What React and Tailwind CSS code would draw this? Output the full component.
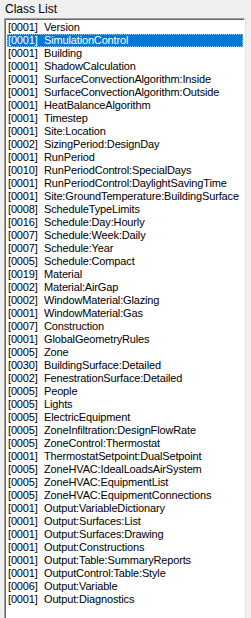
const items = [
  ['0001', 'Version'],
  ['0001', 'SimulationControl'],
  ['0001', 'Building'],
  ['0001', 'ShadowCalculation'],
  ['0001', 'SurfaceConvectionAlgorithm:Inside'],
  ['0001', 'SurfaceConvectionAlgorithm:Outside'],
  ['0001', 'HeatBalanceAlgorithm'],
  ['0001', 'Timestep'],
  ['0001', 'Site:Location'],
  ['0002', 'SizingPeriod:DesignDay'],
  ['0001', 'RunPeriod'],
  ['0010', 'RunPeriodControl:SpecialDays'],
  ['0001', 'RunPeriodControl:DaylightSavingTime'],
  ['0001', 'Site:GroundTemperature:BuildingSurface'],
  ['0008', 'ScheduleTypeLimits'],
  ['0016', 'Schedule:Day:Hourly'],
  ['0007', 'Schedule:Week:Daily'],
  ['0007', 'Schedule:Year'],
  ['0005', 'Schedule:Compact'],
  ['0019', 'Material'],
  ['0002', 'Material:AirGap'],
  ['0002', 'WindowMaterial:Glazing'],
  ['0001', 'WindowMaterial:Gas'],
  ['0007', 'Construction'],
  ['0001', 'GlobalGeometryRules'],
  ['0005', 'Zone'],
  ['0030', 'BuildingSurface:Detailed'],
  ['0002', 'FenestrationSurface:Detailed'],
  ['0005', 'People'],
  ['0005', 'Lights'],
  ['0005', 'ElectricEquipment'],
  ['0005', 'ZoneInfiltration:DesignFlowRate'],
  ['0005', 'ZoneControl:Thermostat'],
  ['0001', 'ThermostatSetpoint:DualSetpoint'],
  ['0005', 'ZoneHVAC:IdealLoadsAirSystem'],
  ['0005', 'ZoneHVAC:EquipmentList'],
  ['0005', 'ZoneHVAC:EquipmentConnections'],
  ['0001', 'Output:VariableDictionary'],
  ['0001', 'Output:Surfaces:List'],
  ['0001', 'Output:Surfaces:Drawing'],
  ['0001', 'Output:Constructions'],
  ['0001', 'Output:Table:SummaryReports'],
  ['0001', 'OutputControl:Table:Style'],
  ['0006', 'Output:Variable'],
  ['0001', 'Output:Diagnostics'],
]

// list row, index 1 is the selected one
const Row = ({ code, name, selected }) => (
  <div
    className={
      selected
        ? 'flex h-[13px] items-center whitespace-nowrap bg-[#0078d7] text-white outline-1 outline-dotted outline-[#8cc4f0] -outline-offset-1'
        : 'flex h-[13px] items-center whitespace-nowrap text-black'
    }
  >
    <span className="w-[37px] shrink-0 pl-[1px]">[{code}]</span>
    <span>{name}</span>
  </div>
)

export default function App() {
  return (
    <div className="w-[251px] h-[618px] overflow-hidden bg-[#f0f0f0] font-['Liberation_Sans',sans-serif] text-[11px] leading-[13px]">
      <div className="h-[18px] pl-[5px] pt-[3px] text-[12px] leading-[12px] text-black">Class List</div>
      <div className="flex">
        <div className="ml-[4px] w-[241px] h-[620px] border-l border-t border-[#a0a0a0] border-r-[#ffffff] border-r bg-white shadow-[inset_1px_1px_0_#696969]">
          <div className="pl-[2px] pt-[2px] pr-[1px] tracking-[-0.15px]">
            {items.map(([code, name], i) => (
              <Row key={i} code={code} name={name} selected={i === 1} />
            ))}
          </div>
        </div>
        <div className="w-[1px] h-[620px] bg-[#e3e3e3]" />
      </div>
    </div>
  )
}
